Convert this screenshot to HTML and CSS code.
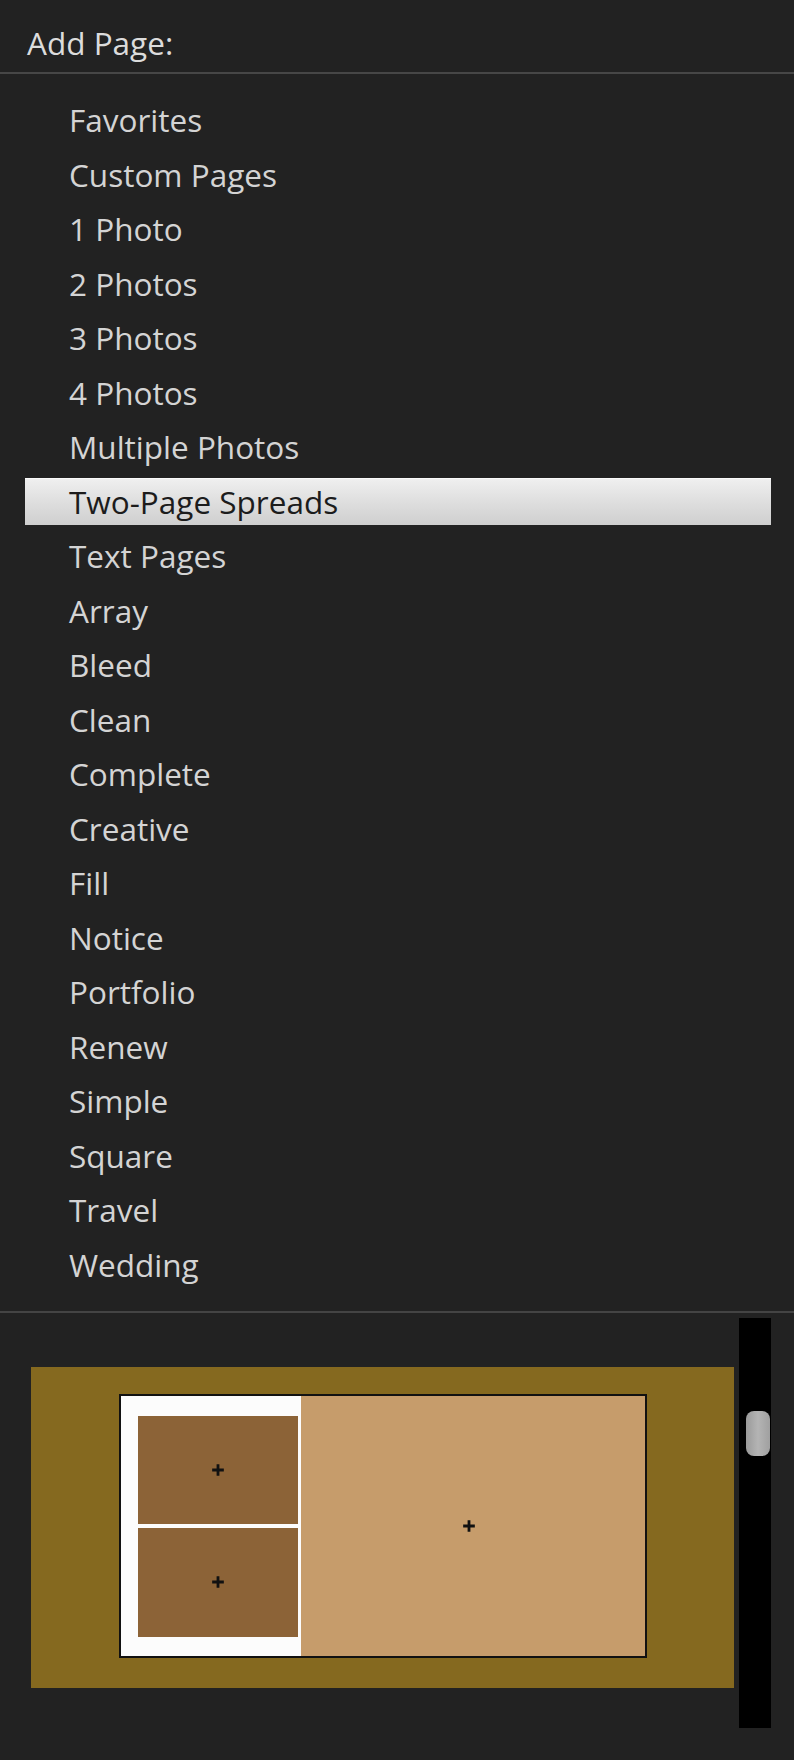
FILE: index.html
```html
<!DOCTYPE html>
<html>
<head>
<meta charset="utf-8">
<link rel="stylesheet" href="styles.css">
</head>
<body>
<div class="panel">
  <div class="header">Add Page:</div>
  <ul class="list">
    <li class="item">Favorites</li>
    <li class="item">Custom Pages</li>
    <li class="item">1 Photo</li>
    <li class="item">2 Photos</li>
    <li class="item">3 Photos</li>
    <li class="item">4 Photos</li>
    <li class="item">Multiple Photos</li>
    <li class="item selected">Two-Page Spreads</li>
    <li class="item">Text Pages</li>
    <li class="item">Array</li>
    <li class="item">Bleed</li>
    <li class="item">Clean</li>
    <li class="item">Complete</li>
    <li class="item">Creative</li>
    <li class="item">Fill</li>
    <li class="item">Notice</li>
    <li class="item">Portfolio</li>
    <li class="item">Renew</li>
    <li class="item">Simple</li>
    <li class="item">Square</li>
    <li class="item">Travel</li>
    <li class="item">Wedding</li>
  </ul>
  <div class="preview-area">
    <div class="preview">
      <div class="spread">
        <div class="left-page">
          <div class="photo"><svg class="plus" viewBox="0 0 12 12"><path d="M6 1V11M1 6H11"/></svg></div>
          <div class="photo"><svg class="plus" viewBox="0 0 12 12"><path d="M6 1V11M1 6H11"/></svg></div>
        </div>
        <div class="right-page"><svg class="plus" viewBox="0 0 12 12"><path d="M6 1V11M1 6H11"/></svg></div>
      </div>
    </div>
    <div class="scrollbar"><div class="thumb"></div></div>
  </div>
</div>
</body>
</html>
```
FILE: styles.css
```css
html, body {
  margin: 0;
  padding: 0;
  background: #222222;
}
.panel {
  width: 794px;
  height: 1760px;
  background: #222222;
  font-family: "Open Sans", "Liberation Sans", sans-serif;
  font-size: 31.5px;
  color: #d4d4d4;
  overflow: hidden;
}
.header {
  height: 42px;
  line-height: 42px;
  padding: 22px 0 8px 27px;
  color: #dcdcdc;
  border-bottom: 2px solid #474747;
}
.list {
  list-style: none;
  margin: 0;
  padding: 22px 23px 23px 25px;
  display: flex;
  flex-direction: column;
  gap: 7.5px;
  border-bottom: 2px solid #444444;
}
.item {
  height: 47px;
  line-height: 47px;
  padding-left: 44px;
  white-space: nowrap;
}
.item.selected {
  background: linear-gradient(#f0f0f0, #e2e2e2 40%, #cfcfcf);
  color: #1c1c1c;
  box-shadow: inset 0 1px 0 #fafafa;
}
.preview-area {
  display: flex;
  align-items: flex-start;
  padding-left: 31px;
}
.preview {
  margin-top: 54px;
  width: 703px;
  height: 321px;
  background: #85691f;
  display: flex;
  justify-content: center;
  align-items: flex-start;
}
.spread {
  margin-top: 27px;
  width: 524px;
  height: 260px;
  border: 2px solid #111111;
  display: flex;
}
.left-page {
  width: 160px;
  background: #fcfcfc;
  padding: 20px 3px 19px 17px;
  display: flex;
  flex-direction: column;
  gap: 4px;
}
.photo {
  flex: 1;
  background: #8c6337;
  display: flex;
  align-items: center;
  justify-content: center;
}
.right-page {
  flex: 1;
  background: #c69c6b;
  display: flex;
  align-items: center;
  justify-content: center;
  padding-right: 8px;
}
.plus {
  width: 14px;
  height: 14px;
  stroke: #111111;
  stroke-width: 2.4;
  fill: none;
}
.scrollbar {
  margin-top: 5px;
  margin-left: 5px;
  width: 32px;
  height: 410px;
  background: #000000;
  box-sizing: border-box;
  padding: 93px 1px 0 7px;
}
.thumb {
  height: 45px;
  border-radius: 8px;
  background: linear-gradient(90deg, #9a9a9a, #b4b4b4 50%, #a0a0a0);
}
```
